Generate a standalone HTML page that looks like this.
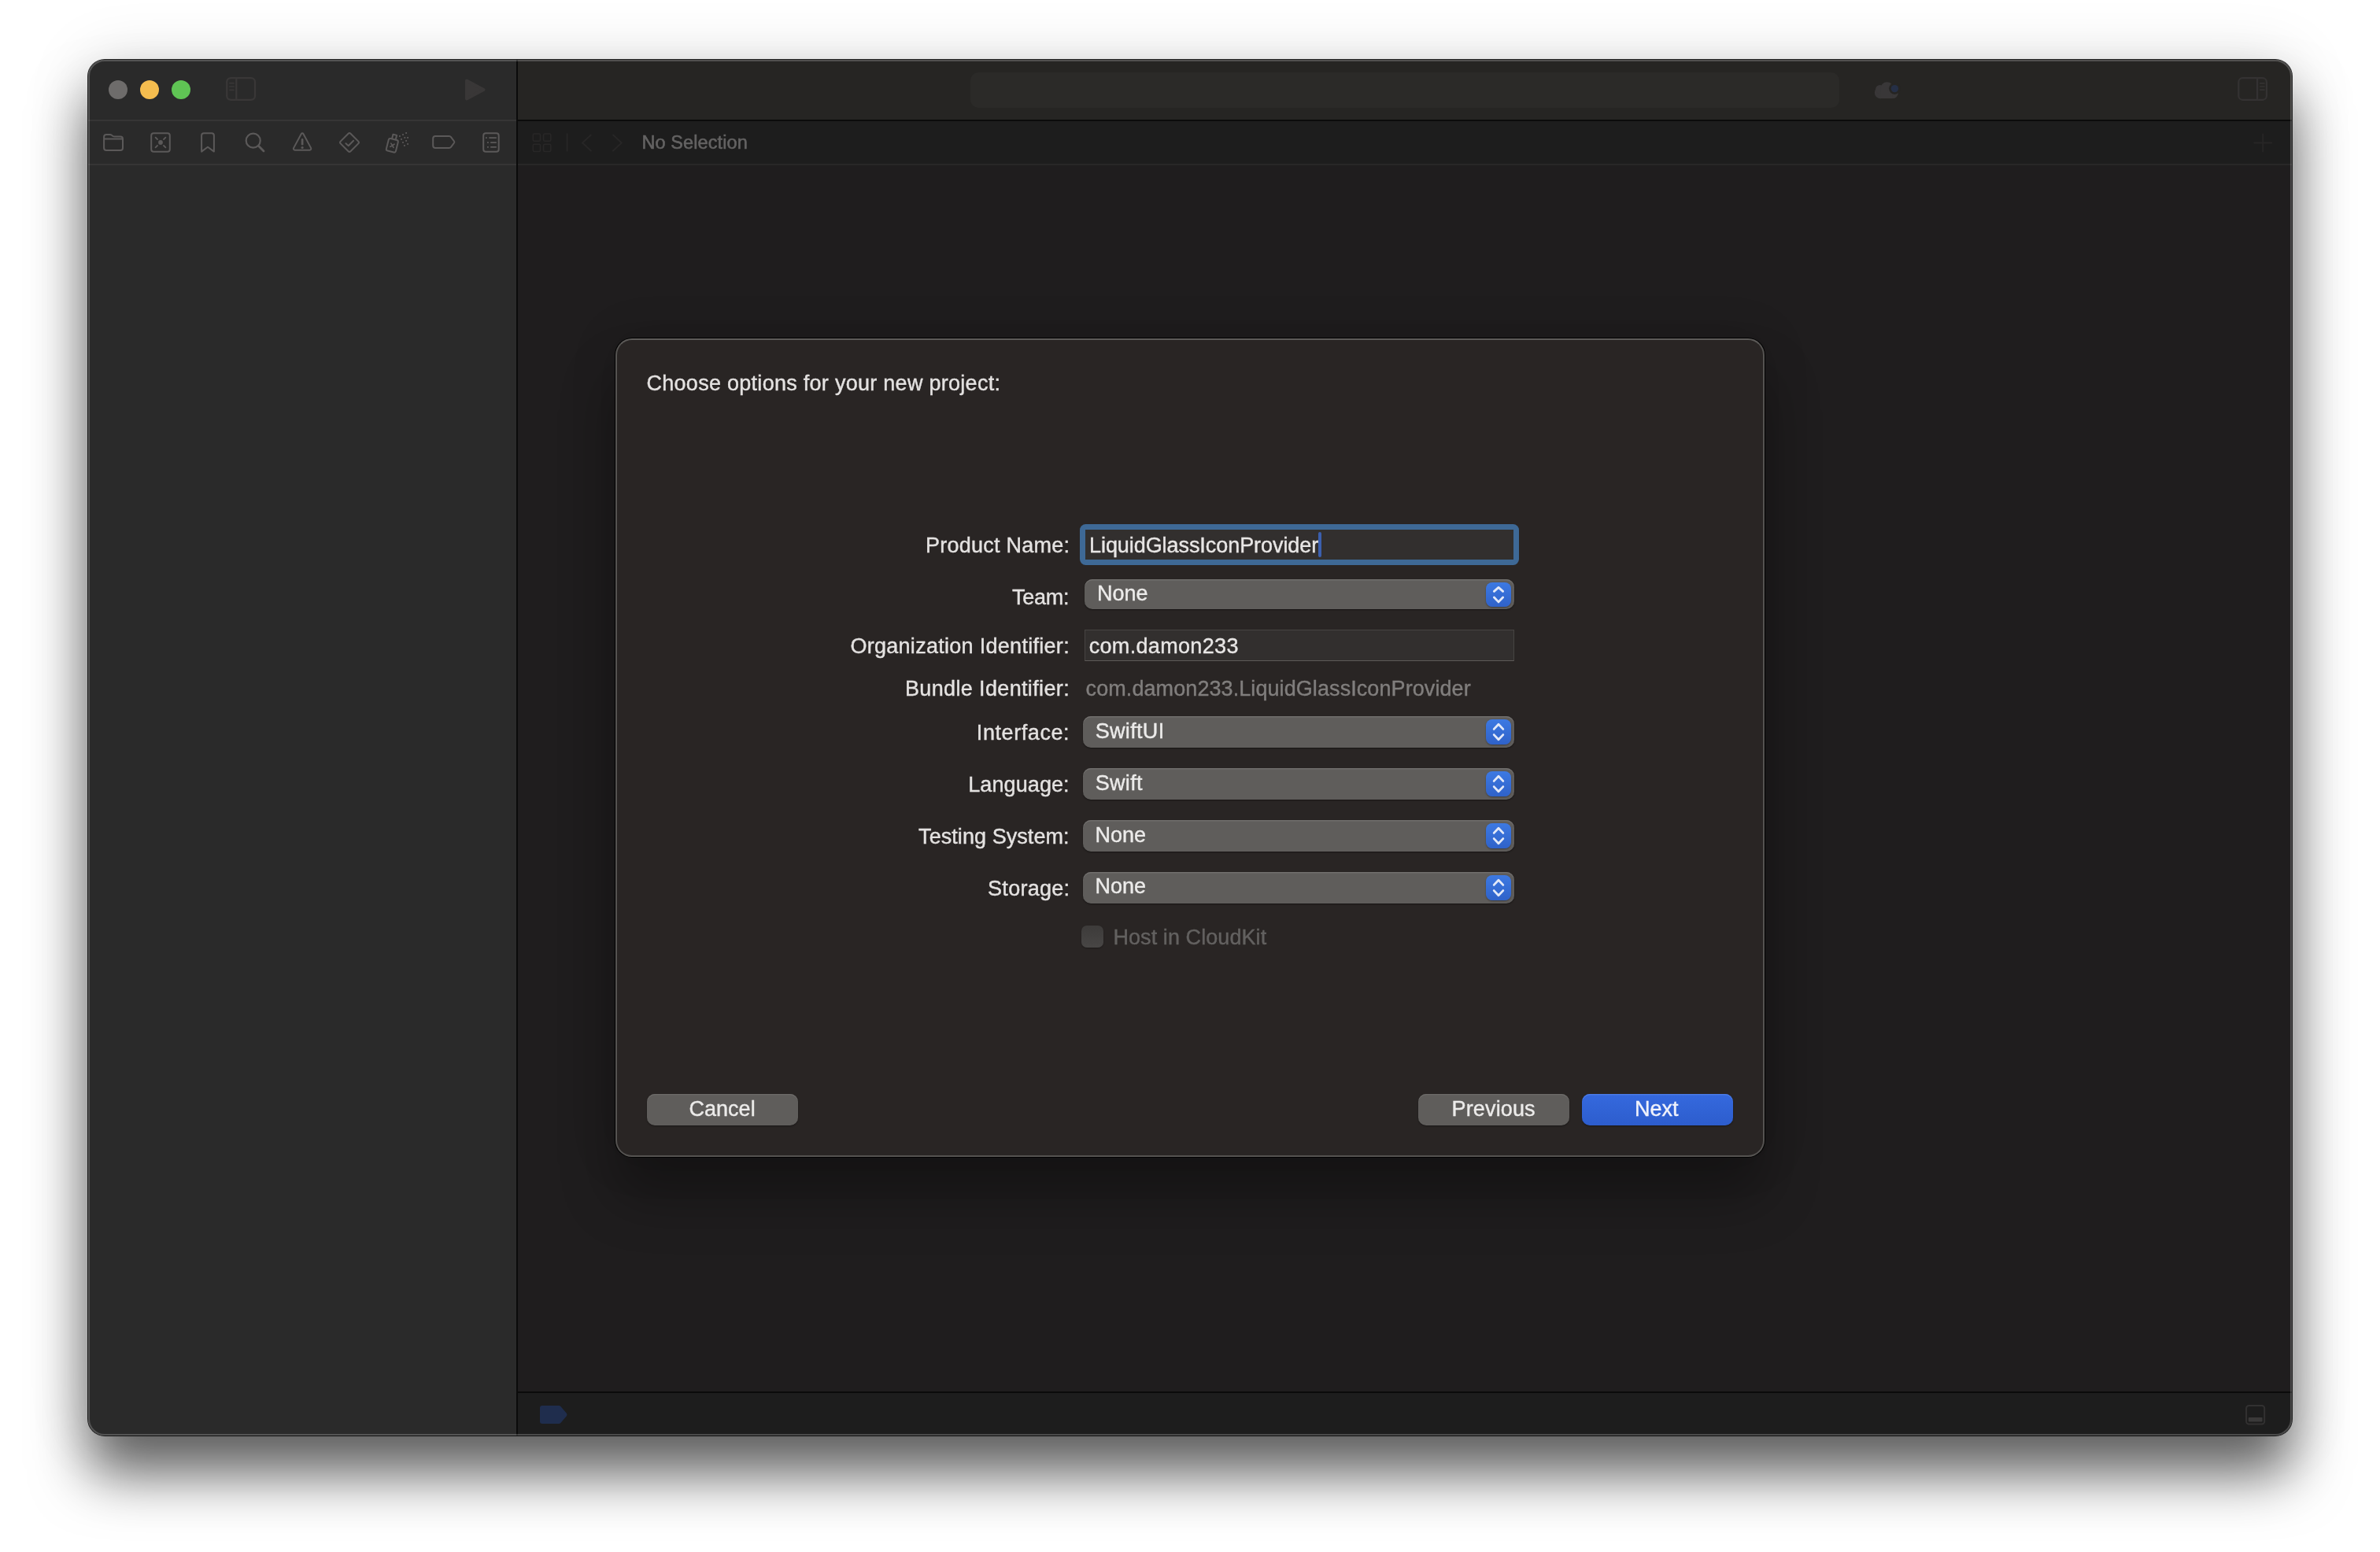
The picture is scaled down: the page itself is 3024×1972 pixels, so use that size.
<!DOCTYPE html>
<html lang="en"><head><meta charset="utf-8"><title>Xcode — New Project Options</title>
<style>
html,body{margin:0;padding:0;}
body{width:3024px;height:1972px;background:#fff;position:relative;overflow:hidden;font-family:"Liberation Sans", sans-serif;}
.a{position:absolute;}
.t{position:absolute;white-space:pre;}
#win{left:112px;top:76px;width:2800px;height:1748px;border-radius:21px;overflow:hidden;background:#1f1d1e;}
#winshadow{left:112px;top:76px;width:2800px;height:1748px;border-radius:21px;
  box-shadow:0 0 0 1px rgba(0,0,0,.85),0 50px 70px rgba(0,0,0,.60),0 0 80px rgba(0,0,0,.13);}
#winedge{left:112px;top:76px;width:2800px;height:1748px;border-radius:21px;box-sizing:border-box;
  border:2px solid rgba(255,255,255,.2);pointer-events:none;}
.popup{position:absolute;background:#5f5d5b;border-radius:10px;box-shadow:inset 0 1.5px 0 #716f6d,0 1px 2px rgba(0,0,0,.45);}
.step{position:absolute;width:32px;height:32px;border-radius:8px;background:linear-gradient(#3d79e2,#2f62c9);box-shadow:0 1px 2px rgba(0,0,0,.35);}
.btn{position:absolute;height:40px;border-radius:10px;background:#5f5d5b;box-shadow:inset 0 1.5px 0 #6b6967,0 1px 2px rgba(0,0,0,.4);}
</style></head>
<body>
<div id="winshadow" class="a"></div>
<div id="win" class="a">
<div class="a" style="left:0px;top:0px;width:544px;height:1748px;background:#2a2a2a;"></div>
<div class="a" style="left:0px;top:76px;width:544px;height:2px;background:#363535;"></div>
<div class="a" style="left:0px;top:132px;width:544px;height:2px;background:#363535;"></div>
<div class="a" style="left:546px;top:0px;width:2254px;height:76px;background:#262523;"></div>
<div class="a" style="left:546px;top:76px;width:2254px;height:2px;background:#0b0b0b;"></div>
<div class="a" style="left:546px;top:78px;width:2254px;height:54px;background:#1d1d1d;"></div>
<div class="a" style="left:546px;top:132px;width:2254px;height:2px;background:#282727;"></div>
<div class="a" style="left:546px;top:134px;width:2254px;height:1558px;background:#1f1d1e;"></div>
<div class="a" style="left:546px;top:1692px;width:2254px;height:2px;background:#0b0b0b;"></div>
<div class="a" style="left:546px;top:1694px;width:2254px;height:54px;background:#1d1d1d;"></div>
<div class="a" style="left:544px;top:0px;width:2px;height:1748px;background:#0b0b0b;"></div>
<div class="a" style="left:1121px;top:16px;width:1104px;height:45px;background:#2b2a28;border-radius:10px;"></div>
</div>
<div id="winedge" class="a"></div>
<div class="a" style="left:138px;top:102px;width:24px;height:24px;border-radius:50%;background:#6e6c6b"></div>
<div class="a" style="left:178px;top:102px;width:24px;height:24px;border-radius:50%;background:#f5bd4f"></div>
<div class="a" style="left:218px;top:102px;width:24px;height:24px;border-radius:50%;background:#5fc454"></div>
<div id="dlg" class="a" style="left:782px;top:430px;width:1460px;height:1040px;box-sizing:border-box;border-radius:21px;background:#292524;border:2px solid #555351;border-top-color:#5d5b59;box-shadow:0 0 0 1px rgba(0,0,0,.92),0 50px 70px rgba(0,0,0,.31),0 0 60px rgba(0,0,0,.13);"></div>
<div class="a" style="left:1372px;top:666px;width:558px;height:52px;border-radius:7.5px;background:#3e6996"></div>
<div class="a" style="left:1378.5px;top:673px;width:544.5px;height:37.7px;background:#322f2e"></div>
<div class="a" style="left:1674.5px;top:676px;width:4px;height:32px;border-radius:2px;background:#3b5fae"></div>
<div class="popup" style="left:1378px;top:736px;width:546px;height:38px"></div>
<div class="step" style="left:1888px;top:740px;height:30.5px"></div>
<div class="a" style="left:1378px;top:800px;width:546px;height:39.5px;box-sizing:border-box;background:#322f2e;border:1px solid #474442;border-bottom-color:#5d5a58"></div>
<div class="popup" style="left:1376px;top:910px;width:548px;height:40px"></div>
<div class="step" style="left:1888px;top:914px"></div>
<div class="popup" style="left:1376px;top:976px;width:548px;height:40px"></div>
<div class="step" style="left:1888px;top:980px"></div>
<div class="popup" style="left:1376px;top:1042px;width:548px;height:40px"></div>
<div class="step" style="left:1888px;top:1046px"></div>
<div class="popup" style="left:1376px;top:1108px;width:548px;height:40px"></div>
<div class="step" style="left:1888px;top:1112px"></div>
<div class="a" style="left:1374px;top:1176px;width:28px;height:28px;border-radius:7px;background:linear-gradient(#3d3b3a,#484645);box-shadow:0 1px 1.5px rgba(0,0,0,.3)"></div>
<div class="btn" style="left:822px;top:1390px;width:192px"></div>
<div class="btn" style="left:1802px;top:1390px;width:192px"></div>
<div class="btn" style="left:2010px;top:1390px;width:192px;background:linear-gradient(#3569de,#2d5dcd);box-shadow:inset 0 1.5px 0 #4a7be6,0 1px 2px rgba(0,0,0,.4)"></div>
<div id="texts" class="a" style="left:0;top:0;width:3024px;height:1972px;will-change:transform">
<div class="t" id="nosel" style="left:815.4px;top:166.0px;font-size:23.5px;line-height:31.5px;font-weight:400;letter-spacing:0.1px;color:#646363;-webkit-text-stroke:0.55px #646363;">No Selection</div>
<div class="t" id="title" style="left:821.5px;top:470.3px;font-size:27px;line-height:35px;font-weight:400;letter-spacing:0.277px;color:#e4e2e1;-webkit-text-stroke:0.4px #e4e2e1;">Choose options for your new project:</div>
<div class="t" id="l1" style="left:1176.0px;top:676.3px;font-size:27px;line-height:35px;font-weight:400;letter-spacing:0.25px;color:#e4e2e1;-webkit-text-stroke:0.4px #e4e2e1;">Product Name:</div>
<div class="t" id="l2" style="left:1286.1px;top:742.0px;font-size:27px;line-height:35px;font-weight:400;letter-spacing:-0.275px;color:#e4e2e1;-webkit-text-stroke:0.4px #e4e2e1;">Team:</div>
<div class="t" id="l3" style="left:1080.4px;top:803.6px;font-size:27px;line-height:35px;font-weight:400;letter-spacing:0.287px;color:#e4e2e1;-webkit-text-stroke:0.4px #e4e2e1;">Organization Identifier:</div>
<div class="t" id="l4" style="left:1150.0px;top:858.0px;font-size:27px;line-height:35px;font-weight:400;letter-spacing:0.353px;color:#e4e2e1;-webkit-text-stroke:0.4px #e4e2e1;">Bundle Identifier:</div>
<div class="t" id="l5" style="left:1240.8px;top:913.7px;font-size:27px;line-height:35px;font-weight:400;letter-spacing:0.578px;color:#e4e2e1;-webkit-text-stroke:0.4px #e4e2e1;">Interface:</div>
<div class="t" id="l6" style="left:1230.2px;top:979.5px;font-size:27px;line-height:35px;font-weight:400;letter-spacing:0.1px;color:#e4e2e1;-webkit-text-stroke:0.4px #e4e2e1;">Language:</div>
<div class="t" id="l7" style="left:1167.1px;top:1045.6px;font-size:27px;line-height:35px;font-weight:400;letter-spacing:0.064px;color:#e4e2e1;-webkit-text-stroke:0.4px #e4e2e1;">Testing System:</div>
<div class="t" id="l8" style="left:1255.1px;top:1111.6px;font-size:27px;line-height:35px;font-weight:400;letter-spacing:0.271px;color:#e4e2e1;-webkit-text-stroke:0.4px #e4e2e1;">Storage:</div>
<div class="t" id="v1" style="left:1384.0px;top:676.3px;font-size:27px;line-height:35px;font-weight:400;letter-spacing:-0.064px;color:#e8e6e5;-webkit-text-stroke:0.4px #e8e6e5;">LiquidGlassIconProvider</div>
<div class="t" id="v2" style="left:1394.1px;top:736.8px;font-size:27px;line-height:35px;font-weight:400;letter-spacing:0.0px;color:#ecebea;-webkit-text-stroke:0.4px #ecebea;">None</div>
<div class="t" id="v3" style="left:1383.7px;top:803.6px;font-size:27px;line-height:35px;font-weight:400;letter-spacing:0.327px;color:#e8e6e5;-webkit-text-stroke:0.4px #e8e6e5;">com.damon233</div>
<div class="t" id="v4" style="left:1379.6px;top:858.0px;font-size:27px;line-height:35px;font-weight:400;letter-spacing:0.08px;color:#807e7d;-webkit-text-stroke:0.4px #807e7d;">com.damon233.LiquidGlassIconProvider</div>
<div class="t" id="v5" style="left:1391.7px;top:911.5px;font-size:27px;line-height:35px;font-weight:400;letter-spacing:0.333px;color:#ecebea;-webkit-text-stroke:0.4px #ecebea;">SwiftUI</div>
<div class="t" id="v6" style="left:1391.7px;top:977.5px;font-size:27px;line-height:35px;font-weight:400;letter-spacing:0.325px;color:#ecebea;-webkit-text-stroke:0.4px #ecebea;">Swift</div>
<div class="t" id="v7" style="left:1391.6px;top:1043.6px;font-size:27px;line-height:35px;font-weight:400;letter-spacing:0.0px;color:#ecebea;-webkit-text-stroke:0.4px #ecebea;">None</div>
<div class="t" id="v8" style="left:1391.6px;top:1109.4px;font-size:27px;line-height:35px;font-weight:400;letter-spacing:0.0px;color:#ecebea;-webkit-text-stroke:0.4px #ecebea;">None</div>
<div class="t" id="cb" style="left:1414.4px;top:1174.1px;font-size:27px;line-height:35px;font-weight:400;letter-spacing:0.08px;color:#636160;-webkit-text-stroke:0.4px #636160;">Host in CloudKit</div>
<div class="t" id="b1" style="left:875.6px;top:1392.2px;font-size:27px;line-height:35px;font-weight:400;letter-spacing:0.0px;color:#ecebea;-webkit-text-stroke:0.4px #ecebea;">Cancel</div>
<div class="t" id="b2" style="left:1844.6px;top:1392.2px;font-size:27px;line-height:35px;font-weight:400;letter-spacing:0.129px;color:#ecebea;-webkit-text-stroke:0.4px #ecebea;">Previous</div>
<div class="t" id="b3" style="left:2076.9px;top:1392.2px;font-size:27px;line-height:35px;font-weight:400;letter-spacing:0.0px;color:#f0f2fb;-webkit-text-stroke:0.4px #f0f2fb;">Next</div>
</div>
<svg class="a" style="left:0;top:0" width="3024" height="1972" viewBox="0 0 3024 1972" fill="none" stroke-linecap="round" stroke-linejoin="round">
<g stroke="#393737" stroke-width="2.3"><rect x="288.2" y="99.2" width="35.8" height="27.6" rx="5"/><path d="M300.3 99.2V126.8"/><path stroke-width="1.7" d="M291.9 105.7H297M291.9 110H297M291.9 114.3H297"/></g>
<path d="M593 102.5L614.5 114L593 125.5Z" fill="#393737" stroke="#393737" stroke-width="4"/>
<g stroke="#5b5959" stroke-width="2">
<path d="M132.1 188V174a3 3 0 0 1 3-3h4.6q1.2 0 2.2 .8l1.6 1.2q.8.6 2 .6H153a3 3 0 0 1 3 3V188a3 3 0 0 1-3 3H135.1a3 3 0 0 1-3-3ZM132.1 176.6H156"/>
<rect x="192.2" y="169.2" width="23.6" height="23.6" rx="3"/>
<circle cx="204" cy="181" r="2.9" fill="#5b5959" stroke="none"/>
<path stroke-width="1.8" d="M197.6 174.6l2.4 2.4M210.4 174.6l-2.4 2.4M197.6 187.4l2.4-2.4M210.4 187.4l-2.4-2.4"/>
<path d="M256.1 192.6V172.2a3 3 0 0 1 3-3h9.8a3 3 0 0 1 3 3V192.6L264 186.7Z"/>
<circle cx="321.7" cy="178.7" r="9" stroke-width="2.2"/><path stroke-width="2.8" d="M328.6 185.6L335 192"/>
<path d="M382.7 170.2a1.6 1.6 0 0 1 2.8 0L395 187.9a1.8 1.8 0 0 1-1.5 2.8H374.7a1.8 1.8 0 0 1-1.5-2.8Z"/>
<path stroke-width="2.7" d="M384.1 177.4V183.2"/><circle cx="384.1" cy="187.5" r="1.6" fill="#5b5959" stroke="none"/>
<path d="M442.6 169.7a2 2 0 0 1 2.8 0l9.9 9.9a2 2 0 0 1 0 2.8l-9.9 9.9a2 2 0 0 1-2.8 0l-9.9-9.9a2 2 0 0 1 0-2.8Z"/>
<path d="M439.4 182.2l3.3 3 6.4-6.5"/>
<g transform="rotate(14 498.5 184)"><rect x="492.3" y="176.8" width="12.4" height="16" rx="2.2"/><path d="M496.2 176.4V170.9h4.8V176.4"/><path stroke-width="1.7" d="M496.4 182.6l4.4 4.4M500.8 182.6l-4.4 4.4"/></g>
<g fill="#5b5959" stroke="none">
<rect x="515.2" y="168.1" width="1.8" height="1.8"/>
<rect x="511.1" y="170.2" width="1.8" height="1.8"/>
<rect x="507.0" y="172.1" width="1.8" height="1.8"/>
<rect x="513.4" y="174.0" width="1.8" height="1.8"/>
<rect x="517.2" y="174.0" width="1.8" height="1.8"/>
<rect x="509.1" y="176.0" width="1.8" height="1.8"/>
<rect x="515.2" y="178.0" width="1.8" height="1.8"/>
<rect x="511.1" y="180.1" width="1.8" height="1.8"/>
<rect x="517.2" y="182.1" width="1.8" height="1.8"/>
<rect x="513.0" y="184.1" width="1.8" height="1.8"/>
</g>
<path d="M553.2 173.1H570.8q1.4 0 2.2 1.1l4 5.3q.7 1 0 2l-4 5.3q-.8 1.1-2.2 1.1H553.2a3 3 0 0 1-3-3V176.1a3 3 0 0 1 3-3Z"/>
<rect x="614.2" y="169.2" width="19.5" height="23.6" rx="3"/>
<path stroke-width="1.8" stroke-linecap="butt" d="M617 175.2h1.8M621.3 175.2h9.5M619 181.1h1.8M623.2 181.1h7.6M619 186.9h1.8M623.2 186.9h7.6"/>
</g>
<g stroke="#282727" stroke-width="1.6">
<rect x="677.3" y="170" width="9.2" height="9.2" rx="1.5"/>
<rect x="690.6" y="170" width="9.2" height="9.2" rx="1.5"/>
<rect x="677.3" y="183.3" width="9.2" height="9.2" rx="1.5"/>
<rect x="690.6" y="183.3" width="9.2" height="9.2" rx="1.5"/>
<path d="M720.6 170V192"/>
<path stroke-width="2" stroke="#272626" d="M750.8 171.6L740 181.6L750.8 191.6M779 171.6L789.8 181.6L779 191.6"/>
<path stroke-width="2" stroke="#272626" d="M2864.2 181.6H2886.2M2875.2 170.6V192.6"/>
</g>
<g fill="#393738"><circle cx="2389.2" cy="117.8" r="7.4"/><circle cx="2388.6" cy="113.4" r="5.5"/><circle cx="2397.6" cy="112.6" r="8.4"/><circle cx="2404.6" cy="117.6" r="7.5"/><rect x="2389.6" y="115" width="15" height="10.1"/></g>
<circle cx="2407.4" cy="112.6" r="7.3" fill="#262523"/><circle cx="2407.4" cy="112.6" r="4.7" fill="#252f46"/>
<g stroke="#343232" stroke-width="2.2"><rect x="2844.3" y="99.2" width="35.6" height="27.6" rx="5"/><path d="M2868.1 99.2V126.8"/><path stroke-width="1.7" d="M2871.6 105.8H2877M2871.6 110H2877M2871.6 114.1H2877"/></g>
<path d="M689 1786H710q1.6 0 2.6 1.2l7.3 8.6q1.2 1.7 0 3.4l-7.3 8.6q-1 1.2-2.6 1.2H689a3 3 0 0 1-3-3V1789a3 3 0 0 1 3-3Z" fill="#1f2d4d"/>
<rect x="2854.1" y="1786" width="23.1" height="23.6" rx="3.5" stroke="#323131" stroke-width="2"/><rect x="2856.8" y="1800.9" width="17.8" height="5.6" rx="1" fill="#3a3939"/>
<g stroke="#e3e9f8" stroke-width="2.8">
<path d="M1898.4 751.4L1904 746.4L1909.6 751.4M1898.4 759L1904 764.9L1909.6 759"/>
<path d="M1898.2 926.4L1904 920.2L1909.8 926.4M1898.2 933.6L1904 939.8L1909.8 933.6"/>
<path d="M1898.2 992.4L1904 986.2L1909.8 992.4M1898.2 999.6L1904 1005.8L1909.8 999.6"/>
<path d="M1898.2 1058.4L1904 1052.2L1909.8 1058.4M1898.2 1065.6L1904 1071.8L1909.8 1065.6"/>
<path d="M1898.2 1124.4L1904 1118.2L1909.8 1124.4M1898.2 1131.6L1904 1137.8L1909.8 1131.6"/>
</g>
</svg>
</body></html>
